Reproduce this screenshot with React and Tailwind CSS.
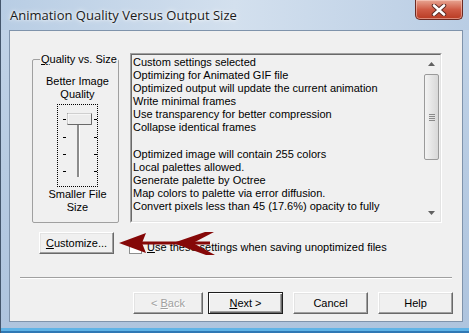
import React from 'react';

const raised =
  'border border-t-white border-l-white border-r-[#696969] border-b-[#696969] shadow-[inset_-1px_-1px_#a0a0a0,inset_1px_1px_#e3e3e3] bg-[#f0f0f0]';

const lines = [
  'Custom settings selected',
  'Optimizing for Animated GIF file',
  'Optimized output will update the current animation',
  'Write minimal frames',
  'Use transparency for better compression',
  'Collapse identical frames',
  '',
  'Optimized image will contain 255 colors',
  'Local palettes allowed.',
  'Generate palette by Octree',
  'Map colors to palette via error diffusion.',
  'Convert pixels less than 45 (17.6%) opacity to fully',
];

const Slider = () => (
  <div className="w-[41px] h-[83px] border border-dotted border-black">
    <svg width="39" height="81" viewBox="0 0 39 81">
      <rect x="19" y="14" width="2" height="58" fill="#8c8c8c" />
      <rect x="21" y="14" width="1" height="58" fill="#ffffff" />
      {[14, 32, 49, 66].map((y) => (
        <g key={y}>
          <rect x="5" y={y} width="3" height="1" fill="#000" />
          <rect x="36" y={y} width="3" height="1" fill="#000" />
        </g>
      ))}
      <rect x="9.5" y="8.5" width="24" height="11" fill="#ececec" stroke="#a0a0a0" />
      <path d="M10 19.5 H33.5 V9" fill="none" stroke="#696969" />
      <path d="M10 18.5 V9 H33" fill="none" stroke="#ffffff" />
    </svg>
  </div>
);

const Underline = ({ children }) => <span className="underline">{children}</span>;

const Scrollbar = () => (
  <div className="w-[17px] flex flex-col bg-[#f0f0f0]">
    <div className="h-[17px] flex items-center justify-center">
      <svg width="7" height="4" viewBox="0 0 7 4">
        <path d="M0 4 L3.5 0 L7 4 Z" fill="#606060" />
      </svg>
    </div>
    <div className="flex-1 pt-[2px]">
      <div className="h-[86px] mx-[1px] rounded-[2px] border border-[#9a9a9a] bg-gradient-to-r from-[#f3f3f3] to-[#d8d8d8] flex flex-col items-center justify-center gap-[1px]">
        {[0, 1, 2, 3].map((i) => (
          <div key={i} className="w-[6px] h-[1px] bg-[#8a8a8a]" />
        ))}
      </div>
    </div>
    <div className="h-[17px] flex items-center justify-center">
      <svg width="7" height="4" viewBox="0 0 7 4">
        <path d="M0 0 L7 0 L3.5 4 Z" fill="#606060" />
      </svg>
    </div>
  </div>
);

export default function App() {
  return (
    <div className="relative w-[469px] h-[333px] flex flex-col bg-gradient-to-b from-[#c2d4e8] via-[#b7cbe2] to-[#aec4de] border-l border-[#44566c] font-['Liberation_Sans',Arial,sans-serif] text-[11px] text-black overflow-hidden">
      {/* title bar */}
      <div className="h-[30px] flex items-start bg-gradient-to-r from-[#b8cde4] via-[#d3e0ee] to-[#b9cde4]">
        <div className="flex-1 pl-[9px] pt-[6px] text-[13px] leading-[18px] text-[#1a1a1a] font-['Open_Sans',sans-serif] [text-shadow:0_0_6px_#ffffff,0_0_3px_#ffffff]">
          Animation Quality Versus Output Size
        </div>
        <div className="w-[48px] h-[20px] mr-[6px] rounded-b-[5px] border border-t-0 border-[#6b2a22] bg-gradient-to-b from-[#e7a593] via-[#cf5b45] to-[#b83a22] shadow-[inset_0_0_0_1px_rgba(255,220,210,0.5)] flex items-center justify-center">
          <svg width="16" height="12" viewBox="0 0 16 12">
            <path d="M3 1.5 L13 10.5 M13 1.5 L3 10.5" stroke="#5a2a24" strokeWidth="4.5" strokeLinecap="round" />
            <path d="M3 1.5 L13 10.5 M13 1.5 L3 10.5" stroke="#ffffff" strokeWidth="2.6" strokeLinecap="round" />
          </svg>
        </div>
      </div>

      {/* client */}
      <div className="pl-[8px] pr-[6px]">
        <div className="h-[292px] bg-[#f0f0f0] border border-[#7f93ab] flex flex-col">
          <div className="flex mt-[22px] ml-[22px] gap-[11px]">
            <fieldset className="w-[87px] min-w-0 shrink-0 h-[170px] border border-[#a0a0a0] rounded-[2px]">
              <legend className="ml-[7px] px-[1px] leading-[13px] whitespace-nowrap">
                <Underline>Q</Underline>uality vs. Size
              </legend>
              <div className="flex flex-col items-center pl-[4px]">
                <div className="mt-[9px] leading-[13px] text-center whitespace-nowrap">
                  Better Image
                  <br />
                  Quality
                </div>
                <div className="mt-[3px]">
                  <Slider />
                </div>
                <div className="mt-[1px] leading-[13px] text-center whitespace-nowrap">
                  Smaller File
                  <br />
                  Size
                </div>
              </div>
            </fieldset>

            <div className="w-[312px] shrink-0 h-[170px] border border-t-[#a0a0a0] border-l-[#a0a0a0] border-r-white border-b-white">
              <div className="h-full border border-t-[#696969] border-l-[#696969] border-r-[#e3e3e3] border-b-[#e3e3e3] flex">
                <div className="flex-1 pl-[1px] pt-[1px] leading-[13.1px] whitespace-nowrap overflow-hidden">
                  {lines.map((l, i) => (
                    <div key={i} className="h-[13.1px]">
                      {l}
                    </div>
                  ))}
                </div>
                <Scrollbar />
              </div>
            </div>
          </div>

          <div className="flex items-start mt-[9px] ml-[29px]">
            <button className={`w-[75px] h-[22px] ${raised} flex items-center justify-center`}>
              <span>
                <Underline>C</Underline>ustomize...
              </span>
            </button>
            <div className="flex items-center mt-[9px] ml-[15px]">
              <div className="w-[13px] h-[13px] border border-[#8e8f8f] bg-white" />
              <span className="ml-[5px] leading-[13px]">
                <Underline>U</Underline>se these settings when saving unoptimized files
              </span>
            </div>
          </div>

          <div className="mx-[10px] mt-[23px] h-[2px] border-t border-[#a0a0a0] border-b border-b-white" />

          <div className="flex justify-end mt-[13px] mr-[9px]">
            <button className={`w-[70px] h-[22px] ${raised} text-[#a0a0a0] [text-shadow:1px_1px_#ffffff]`}>
              &lt; <Underline>B</Underline>ack
            </button>
            <button className="w-[75px] h-[22px] ml-[5px] bg-[#f0f0f0] border border-[#1e1e1e] shadow-[inset_1px_1px_#ffffff,inset_-1px_-1px_#696969,inset_-2px_-2px_#a0a0a0]">
              <Underline>N</Underline>ext &gt;
            </button>
            <button className={`w-[75px] h-[22px] ml-[10px] ${raised}`}>Cancel</button>
            <button className={`w-[75px] h-[22px] ml-[10px] ${raised}`}>Help</button>
          </div>
        </div>
      </div>

      {/* bottom frame */}
      <div className="flex-1 flex flex-col justify-end">
        <div className="h-[3px] bg-[#5fb3e6]" />
        <div className="h-[2px] bg-[#2f78b4]" />
      </div>

      {/* annotation arrow */}
      <svg className="absolute left-[115px] top-[230px]" width="100" height="28" viewBox="0 0 100 28">
        <polygon points="3,13 30,3 26,13 30,23" fill="#850808" />
        <rect x="24" y="11.5" width="70" height="3" fill="#850808" />
        <polygon points="57,13 89,2 98,2 77,13 99,25 90,25" fill="#850808" />
      </svg>
    </div>
  );
}
